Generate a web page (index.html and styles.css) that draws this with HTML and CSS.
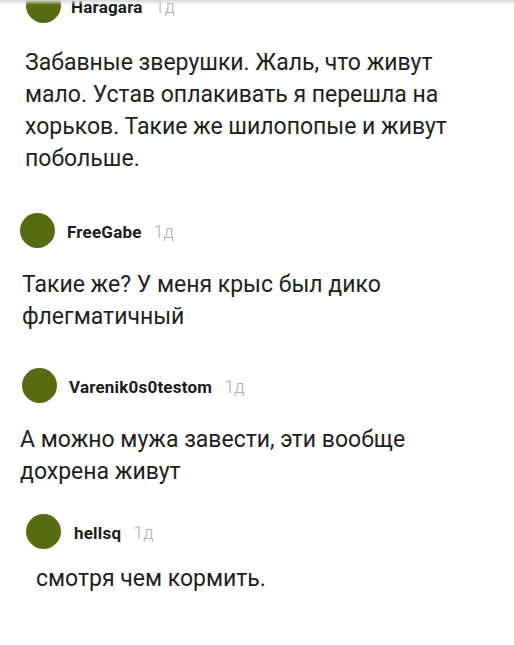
FILE: index.html
```html
<!DOCTYPE html>
<html lang="ru">
<head>
<meta charset="utf-8">
<title>Комментарии</title>
<link rel="stylesheet" href="styles.css">
</head>
<body>
<div class="shade"></div>
<main class="feed">
  <section class="comment c1">
    <div class="head">
      <span class="avatar"></span>
      <span class="name">Haragara</span>
      <span class="time">1д</span>
    </div>
    <p class="text">Забавные зверушки. Жаль, что живут мало. Устав оплакивать я перешла на хорьков. Такие же шилопопые и живут побольше.</p>
  </section>
  <section class="comment c2">
    <div class="head">
      <span class="avatar"></span>
      <span class="name">FreeGabe</span>
      <span class="time">1д</span>
    </div>
    <p class="text">Такие же? У меня крыс был дико флегматичный</p>
  </section>
  <section class="comment c3">
    <div class="head">
      <span class="avatar"></span>
      <span class="name">Varenik0s0testom</span>
      <span class="time">1д</span>
    </div>
    <p class="text">А можно мужа завести, эти вообще дохрена живут</p>
  </section>
  <section class="comment c4">
    <div class="head">
      <span class="avatar"></span>
      <span class="name">hellsq</span>
      <span class="time">1д</span>
    </div>
    <p class="text">смотря чем кормить.</p>
  </section>
</main>
</body>
</html>
```

FILE: styles.css
```css
html, body {
  margin: 0;
  padding: 0;
  background: #ffffff;
  overflow: hidden;
}
body {
  font-family: Roboto, "Noto Sans", "Liberation Sans", sans-serif;
  color: #1a1a1a;
  width: 514px;
  height: 645px;
  position: relative;
}
.shade {
  position: absolute;
  left: 0;
  top: 0;
  width: 100%;
  height: 5px;
  background: linear-gradient(#d8d8d8, rgba(255,255,255,0));
  z-index: 2;
}
.feed {
  display: flex;
  flex-direction: column;
}
.comment {
  display: flex;
  flex-direction: column;
}
.head {
  display: flex;
  align-items: center;
  height: 35px;
}
.avatar {
  width: 35px;
  height: 35px;
  border-radius: 50%;
  background: #556c10;
  flex: none;
}
.name {
  font-weight: 700;
  font-size: 17px;
  color: #1c1c1c;
  margin-left: 11px;
  letter-spacing: 0.2px;
  padding-top: 2px;
}
.time {
  font-size: 18px;
  font-weight: 300;
  color: #b0b0b0;
  margin-left: 12px;
  padding-top: 2px;
}
.text {
  margin: 0;
  font-size: 23px;
  line-height: 32px;
  color: #1e1e1e;
  padding-right: 60px;
}

.c1 .head { margin-top: -12px; padding-left: 26px; }
.c1 .name { margin-left: 10px; }
.c1 .text { margin-top: 24px; padding-left: 25px; }

.c2 { margin-top: 38px; }
.c2 .head { padding-left: 20px; }
.c2 .name { margin-left: 12px; }
.c2 .text { margin-top: 21px; padding-left: 22px; }

.c3 { margin-top: 35px; }
.c3 .head { padding-left: 22px; }
.c3 .name { margin-left: 12px; }
.c3 .text { margin-top: 21px; padding-left: 20px; }

.c4 { margin-top: 26px; }
.c4 .head { padding-left: 26px; }
.c4 .name { margin-left: 13px; }
.c4 .text { margin-top: 14px; padding-left: 36px; }
```
